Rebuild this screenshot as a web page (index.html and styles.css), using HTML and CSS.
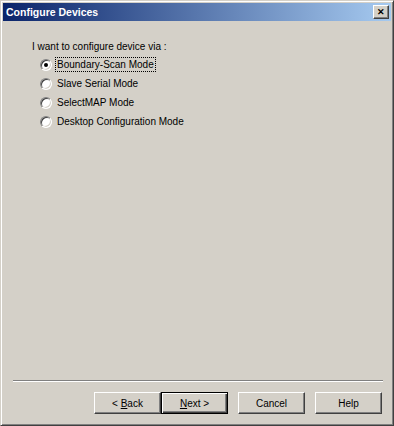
FILE: index.html
```html
<!DOCTYPE html>
<html lang="en">
<head>
    <meta charset="UTF-8">
    <title>Configure Devices</title>
    <link rel="stylesheet" href="styles.css">
</head>
<body>
    <div class="window">
        <div class="titlebar">
            <span class="title">Configure Devices</span>
            <span class="close">&#x2715;</span>
        </div>

        <div class="content">
            <p class="prompt">I want to configure device via :</p>
            <div class="options">
                <div class="option">
                    <span class="radio checked"></span>
                    <span class="label focus">Boundary-Scan Mode</span>
                </div>
                <div class="option">
                    <span class="radio"></span>
                    <span class="label">Slave Serial Mode</span>
                </div>
                <div class="option">
                    <span class="radio"></span>
                    <span class="label">SelectMAP Mode</span>
                </div>
                <div class="option">
                    <span class="radio"></span>
                    <span class="label">Desktop Configuration Mode</span>
                </div>
            </div>
        </div>

        <div class="separator"></div>

        <div class="buttons">
            <button class="btn">&lt; <u>B</u>ack</button>
            <button class="btn default"><u>N</u>ext &gt;</button>
            <button class="btn gap">Cancel</button>
            <button class="btn gap">Help</button>
        </div>
    </div>
</body>
</html>
```

FILE: styles.css
```css
body {
    margin: 0;
    font-family: "Liberation Sans", Arial, sans-serif;
    font-size: 10px;
    color: #000;
}
.window {
    width: 394px;
    height: 426px;
    box-sizing: border-box;
    background: #d4d0c8;
    border: 1px solid;
    border-color: #d4d0c8 #404040 #404040 #d4d0c8;
    box-shadow: inset 1px 1px #fff, inset -1px -1px #808080;
    padding: 2px;
    display: flex;
    flex-direction: column;
}
.titlebar {
    height: 18px;
    background: linear-gradient(to right, #0a246a, #a6caf0);
    display: flex;
    align-items: center;
    justify-content: space-between;
    padding: 0 2px 0 3px;
}
.title {
    color: #fff;
    font-weight: bold;
    font-size: 10.5px;
}
.close {
    width: 16px;
    height: 14px;
    box-sizing: border-box;
    background: #d4d0c8;
    border: 1px solid;
    border-color: #fff #404040 #404040 #fff;
    box-shadow: inset -1px -1px #808080;
    font-size: 9px;
    font-weight: bold;
    line-height: 12px;
    text-align: center;
}
.content {
    flex: 1;
    padding: 19px 0 0 29px;
}
.prompt {
    margin: 0;
    line-height: 14px;
}
.options {
    padding: 1px 0 0 8px;
}
.option {
    display: flex;
    align-items: center;
    height: 19px;
}
.radio {
    width: 12px;
    height: 12px;
    box-sizing: border-box;
    border-radius: 50%;
    background: #fff;
    border: 1px solid;
    border-color: #808080 #fff #fff #808080;
    box-shadow: inset 1px 1px #404040, inset -1px -1px #d4d0c8;
    display: flex;
    align-items: center;
    justify-content: center;
}
.radio.checked::after {
    content: "";
    width: 4px;
    height: 4px;
    border-radius: 50%;
    background: #000;
}
.label {
    margin-left: 3px;
    padding: 0 1px;
    line-height: 13px;
    border: 1px solid transparent;
}
.label.focus {
    border: 1px dotted #000;
}
.separator {
    margin: 0 8px 0 10px;
    border-top: 1px solid #808080;
    border-bottom: 1px solid #fff;
}
.buttons {
    display: flex;
    justify-content: flex-end;
    padding: 10px 9px 9px 0;
}
.btn {
    width: 67px;
    height: 22px;
    box-sizing: border-box;
    background: #d4d0c8;
    font-family: "Liberation Sans", Arial, sans-serif;
    font-size: 10px;
    color: #000;
    border: 1px solid;
    border-color: #fff #404040 #404040 #fff;
    box-shadow: inset -1px -1px #808080;
    padding: 0;
}
.btn.default {
    border: 1px solid #000;
    box-shadow: inset 1px 1px #fff, inset -1px -1px #404040, inset -2px -2px #808080;
}
.btn.gap {
    margin-left: 10px;
}
```
